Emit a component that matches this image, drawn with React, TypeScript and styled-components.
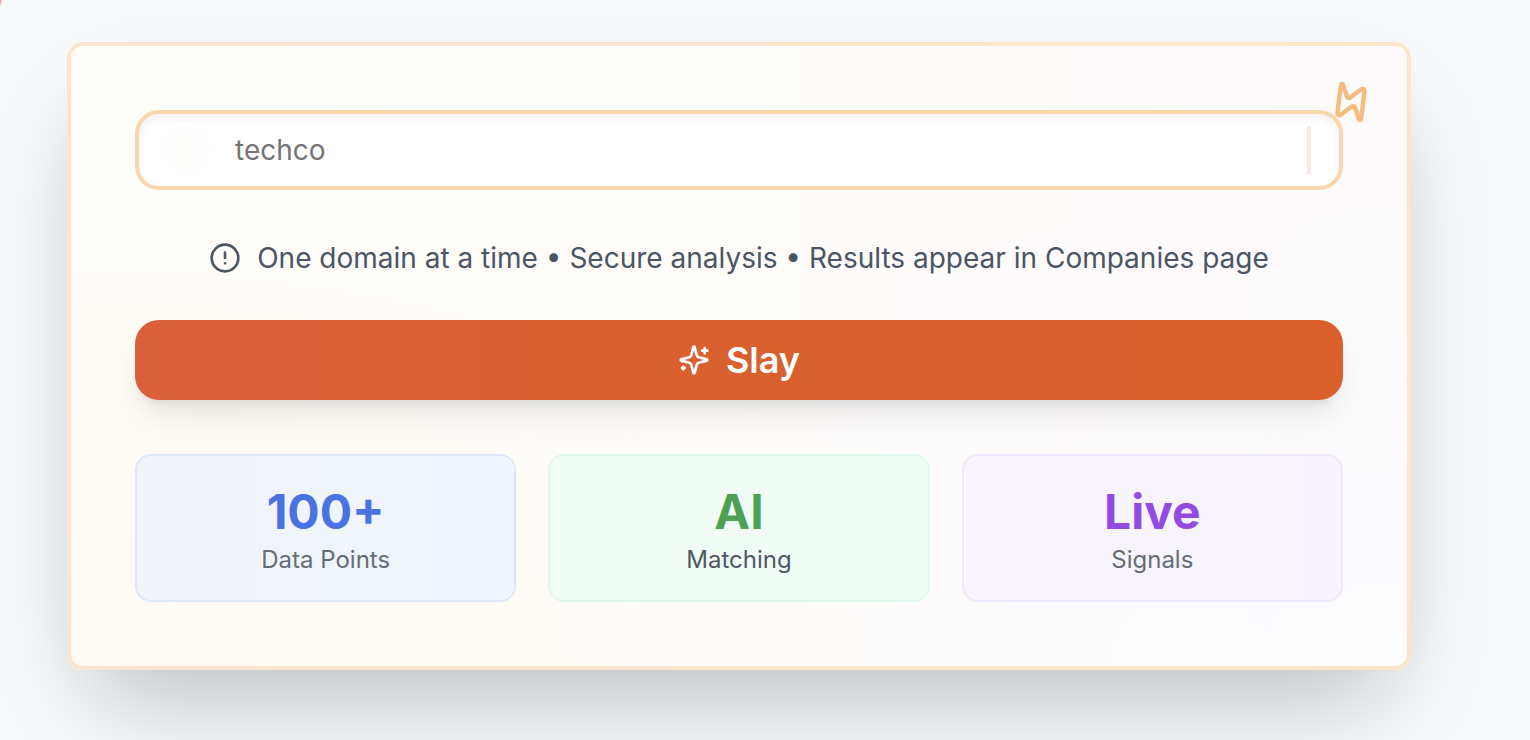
import React from "react";
import styled, { createGlobalStyle } from "styled-components";

const GlobalStyle = createGlobalStyle`
  *, *::before, *::after { box-sizing: border-box; }
  body {
    margin: 0;
    background: #f8fafc;
    font-family: Inter, "Liberation Sans", sans-serif;
    color: #4b5563;
  }
`;

const Page = styled.main`
  position: relative;
  overflow: hidden;
  min-height: 100vh;
  padding: 42px 119px 70px 67px;
`;

const EdgeGlow = styled.span`
  position: absolute;
  left: -30px;
  top: -24px;
  width: 32px;
  height: 40px;
  border-radius: 50%;
  background: #f0a898;
`;

const Card = styled.section`
  position: relative;
  padding: 64px;
  border: 4px solid #fbe6cd;
  border-radius: 16px;
  background:
    radial-gradient(ellipse at bottom left, #fffaf3, rgba(255, 250, 243, 0) 50%),
    radial-gradient(ellipse at bottom right, #fdfcff, rgba(253, 252, 255, 0) 60%),
    linear-gradient(to right, #fffdf8, #fefdfa 50%, #fdfafb);
  box-shadow: 0 50px 100px -24px rgba(0, 0, 0, 0.25);
`;

const ZapIcon = styled.svg`
  position: absolute;
  top: 32px;
  right: 32px;
  width: 48px;
  height: 48px;
  color: #f4bc7f;
  transform: rotate(-37deg);
`;

const Field = styled.label`
  display: flex;
  align-items: center;
  height: 80px;
  padding: 0 28px 0 20px;
  border: 4px solid #f9d7ae;
  border-radius: 24px;
  background: #fff;
  box-shadow: inset 0 4px 8px rgba(0, 0, 0, 0.06);
`;

const FieldGlow = styled.span`
  width: 56px;
  height: 56px;
  margin-right: 20px;
  border-radius: 50%;
  background: radial-gradient(closest-side, #fffcfb, #fffdfc 60%, #ffffff);
`;

const DomainInput = styled.input`
  flex: 1;
  min-width: 0;
  height: 48px;
  padding: 0;
  border: 0;
  outline: 0;
  background: transparent;
  font: 400 28px/40px Inter, "Liberation Sans", sans-serif;
  color: #1f2937;
  &::placeholder { color: #757575; opacity: 1; }
`;

const Cursor = styled.span`
  width: 4px;
  height: 48px;
  background: #fae9e5;
`;

const Note = styled.p`
  display: flex;
  align-items: center;
  justify-content: center;
  gap: 16px;
  margin: 48px 0 42px;
  font-size: 28px;
  line-height: 40px;
`;

const Icon = styled.svg`
  flex: none;
  width: 32px;
  height: 32px;
`;

const SlayButton = styled.button`
  display: flex;
  align-items: center;
  justify-content: center;
  gap: 16px;
  width: 100%;
  height: 80px;
  border: 0;
  border-radius: 24px;
  background: linear-gradient(to right, #da5f3b, #d9602f 50%, #d96029);
  box-shadow: 0 20px 30px -6px rgba(0, 0, 0, 0.1), 0 8px 12px -8px rgba(0, 0, 0, 0.1);
  font: 600 36px/56px Inter, "Liberation Sans", sans-serif;
  color: #fff;
`;

const Stats = styled.div`
  display: grid;
  grid-template-columns: repeat(3, 1fr);
  gap: 32px;
  margin-top: 54px;
`;

const Stat = styled.div<{ $fill: string; $line: string }>`
  padding: 24px;
  border: 2px solid ${(p) => p.$line};
  border-radius: 16px;
  background: ${(p) => p.$fill};
  text-align: center;
`;

const StatValue = styled.div<{ $color: string }>`
  font-size: 48px;
  font-weight: 700;
  line-height: 64px;
  color: ${(p) => p.$color};
`;

const StatLabel = styled.div<{ $color: string }>`
  font-size: 24px;
  line-height: 32px;
  color: ${(p) => p.$color};
`;

const stats = [
  { value: "100+", label: "Data Points", color: "#4a72e3", labelColor: "#666c77", fill: "linear-gradient(to right, #f0f4f8, #f0f5fe)", line: "#dfe8fa" },
  { value: "AI", label: "Matching", color: "#4da154", labelColor: "#4f5864", fill: "linear-gradient(to right, #f1fdf6, #f1fbf6)", line: "#e1f8ea" },
  { value: "Live", label: "Signals", color: "#934ce2", labelColor: "#666c77", fill: "linear-gradient(to right, #f9f5fe, #f6f3fe)", line: "#efe7fd" },
];

const stroke = {
  viewBox: "0 0 24 24",
  fill: "none",
  stroke: "currentColor",
  strokeWidth: 2,
  strokeLinecap: "round",
  strokeLinejoin: "round",
  "aria-hidden": true,
} as const;

export default function App() {
  return (
    <>
      <GlobalStyle />
      <Page>
        <EdgeGlow />
        <Card>
          <Field>
            <FieldGlow />
            <DomainInput type="text" placeholder="techco" aria-label="Company domain" />
            <Cursor />
          </Field>
          <ZapIcon {...stroke} strokeWidth={2.2}>
            <path d="M4 14a1 1 0 0 1-.78-1.63l9.9-10.2a.5.5 0 0 1 .86.46l-1.92 6.02A1 1 0 0 0 13 10h7a1 1 0 0 1 .78 1.63l-9.9 10.2a.5.5 0 0 1-.86-.46l1.92-6.02A1 1 0 0 0 11 14z" />
          </ZapIcon>
          <Note>
            <Icon {...stroke}>
              <circle cx="12" cy="12" r="10" />
              <path d="M12 8v4M12 16h.01" />
            </Icon>
            <span>One domain at a time • Secure analysis • Results appear in Companies page</span>
          </Note>
          <SlayButton type="button">
            <Icon {...stroke}>
              <path d="M9.937 15.5A2 2 0 0 0 8.5 14.063l-6.135-1.582a.5.5 0 0 1 0-.962L8.5 9.936A2 2 0 0 0 9.937 8.5l1.582-6.135a.5.5 0 0 1 .963 0L14.063 8.5A2 2 0 0 0 15.5 9.937l6.135 1.581a.5.5 0 0 1 0 .964L15.5 14.063a2 2 0 0 0-1.437 1.437l-1.582 6.135a.5.5 0 0 1-.963 0z" />
              <path d="M20 3v4M22 5h-4M4 17v2M5 18H3" />
            </Icon>
            Slay
          </SlayButton>
          <Stats>
            {stats.map((s) => (
              <Stat key={s.label} $fill={s.fill} $line={s.line}>
                <StatValue $color={s.color}>{s.value}</StatValue>
                <StatLabel $color={s.labelColor}>{s.label}</StatLabel>
              </Stat>
            ))}
          </Stats>
        </Card>
      </Page>
    </>
  );
}
